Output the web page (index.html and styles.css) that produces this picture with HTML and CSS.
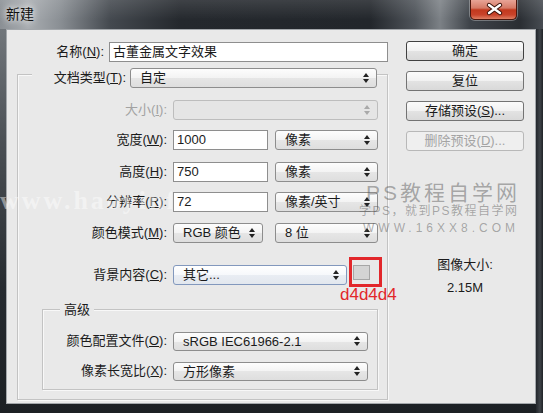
FILE: index.html
```html
<!DOCTYPE html>
<html>
<head>
<meta charset="utf-8"/>
<title>新建</title>
<link rel="stylesheet" href="styles.css">
</head>
<body>
<div class="window">
	<!-- 标题栏 -->
	<div class="titlebar">
		<span class="title">新建</span>
		<span class="close">
			<svg width="47" height="19" viewBox="0 0 47 19">
				<path d="M18 5 L29 13 M29 5 L18 13" stroke="#3b1209" stroke-width="4.4" stroke-linecap="round"/>
				<path d="M18 5 L29 13 M29 5 L18 13" stroke="#fff" stroke-width="2.4" stroke-linecap="round"/>
			</svg>
		</span>
	</div>
	<div class="client">
		<div class="main">
			<div class="name-row">
				<span class="lbl name-lbl">名称(<u>N</u>):</span>
				<div class="input name-input">古董金属文字效果</div>
			</div>
			<!-- 文档类型 -->
			<div class="group">
				<div class="group-head">
					<span class="lbl head-lbl">文档类型(<u>T</u>):</span>
					<div class="select head-select">自定</div>
				</div>
				<div class="row r-size">
					<span class="lbl off">大小(<u>I</u>):</span>
					<div class="select full disabled"></div>
				</div>
				<div class="row r-w">
					<span class="lbl">宽度(<u>W</u>):</span>
					<div class="input num">1000</div>
					<div class="select unit">像素</div>
				</div>
				<div class="row r-h">
					<span class="lbl">高度(<u>H</u>):</span>
					<div class="input num">750</div>
					<div class="select unit">像素</div>
				</div>
				<div class="row r-res">
					<span class="lbl">分辨率(<u>R</u>):</span>
					<div class="input num">72</div>
					<div class="select unit">像素/英寸</div>
				</div>
				<div class="row r-mode">
					<span class="lbl">颜色模式(<u>M</u>):</span>
					<div class="select mode">RGB 颜色</div>
					<div class="select unit">8 位</div>
				</div>
				<div class="row r-bg">
					<span class="lbl">背景内容(<u>C</u>):</span>
					<div class="select bg-select">其它...</div>
					<div class="swatch-wrap">
						<div class="swatch"></div>
						<span class="note">d4d4d4</span>
					</div>
				</div>
				<!-- 高级 -->
				<div class="subgroup">
					<div class="legend">高级</div>
					<div class="row r-prof">
						<span class="lbl">颜色配置文件(<u>O</u>):</span>
						<div class="select sub">sRGB IEC61966-2.1</div>
					</div>
					<div class="row r-ratio">
						<span class="lbl">像素长宽比(<u>X</u>):</span>
						<div class="select sub">方形像素</div>
					</div>
				</div>
			</div>
		</div>
		<!-- 按钮 -->
		<div class="side">
			<div class="btn default">确定</div>
			<div class="btn">复位</div>
			<div class="btn">存储预设(<u>S</u>)...</div>
			<div class="btn off">删除预设(<u>D</u>)...</div>
			<div class="size-title">图像大小:</div>
			<div class="size-val">2.15M</div>
		</div>
	</div>
	<!-- 水印 -->
	<div class="wm-url">www.haoyinfo.com</div>
	<div class="wm-ps">PS教程自学网</div>
	<div class="wm-sub">学PS，就到PS教程自学网</div>
	<div class="wm-site">WWW.16XX8.COM</div>
</div>
</body>
</html>
```
FILE: styles.css
```css
*{margin: 0;padding: 0;box-sizing: border-box}
body{
	width: 543px;
	height: 413px;
	overflow: hidden;
	font: 13px "Liberation Sans", "Noto Sans CJK SC", sans-serif;
	color: #1b1b1b;
	background: #22262a;
}
u{text-decoration: underline}
.window{
	position: relative;
	width: 543px;
	height: 413px;
	overflow: hidden;
	background:
		linear-gradient(90deg, transparent 536px, #23272c 536px, #3e4348 540px, #1f2327 543px),
		linear-gradient(180deg, #7b8085 0%, #4a4f54 35%, #262b30 70%, #1c2024 100%);
}
/* 标题栏 */
.titlebar{
	display: flex;
	align-items: flex-start;
	height: 29px;
	background:
		linear-gradient(180deg, rgba(255,255,255,.12), rgba(255,255,255,0) 70%),
		linear-gradient(90deg, #8a8f94 0, #a9adb1 28px, #8a8f94 60px, #44494f 110px, #24282d 180px, #22262b 370px, #4f545a 415px, #7c8186 440px, #3e4349 470px, #2a2e33 520px, #474c52 543px);
}
.title{
	margin: 5px 0 0 6px;
	font-size: 14px;
	line-height: 18px;
	color: #111;
	text-shadow: 0 0 6px rgba(255,255,255,.9), 0 0 10px rgba(255,255,255,.6);
}
.close{
	display: block;
	width: 47px;
	height: 20px;
	margin: 0 26px 0 auto;
	border: 1px solid #4e160c;
	border-top: 0;
	border-radius: 0 0 5px 5px;
	background: linear-gradient(180deg, #e8a496 0%, #d57a66 42%, #c2391e 52%, #c9432a 78%, #de8064 100%);
	box-shadow: 0 0 0 1px rgba(255,255,255,.3);
}
.close svg{display: block}
/* 内容区 */
.client{
	display: flex;
	height: 375px;
	margin: 0 7px 0 6px;
	padding: 12px 11px 0 10px;
	background: #e9e9e9;
	border: 1px solid #a3a7ab;
}
.main{width: 371px}
.lbl{
	display: block;
	text-align: right;
	line-height: 20px;
	white-space: nowrap;
}
.lbl.off{color: #a2a2a2}
.name-row{
	display: flex;
	height: 20px;
}
.name-lbl{width: 87px;margin-right: 5px}
.input{
	height: 20px;
	border: 1px solid #8e8e8e;
	background: #fff;
	padding-left: 3px;
	line-height: 18px;
	white-space: nowrap;
}
.name-input{width: 279px}
.input.num{width: 95px;margin-right: 7px}
.select{
	position: relative;
	height: 20px;
	border: 1px solid #8d8d8d;
	border-radius: 3px;
	background: linear-gradient(180deg, #fdfdfd, #f3f3f3 50%, #e6e6e6 50%, #dedede);
	padding-left: 9px;
	line-height: 18px;
	white-space: nowrap;
}
.select::before,
.select::after{
	content: '';
	position: absolute;
	right: 7px;
	top: 50%;
	border-left: 3px solid transparent;
	border-right: 3px solid transparent;
}
.select::before{
	margin-top: -5px;
	border-bottom: 4px solid #222;
}
.select::after{
	margin-top: 1px;
	border-top: 4px solid #222;
}
.select.disabled{
	border-color: #bdbdbd;
	background: #e5e5e5;
}
.select.disabled::before{border-bottom-color: #a9a9a9}
.select.disabled::after{border-top-color: #a9a9a9}
/* 分组 */
.group{
	margin-top: 12px;
	border: 1px solid #c3c3c3;
	box-shadow: inset 1px 1px 0 #f8f8f8, 1px 1px 0 #f8f8f8;
	padding-bottom: 9px;
}
.group-head{
	display: flex;
	height: 20px;
	margin: -7px 10px 0 14px;
	padding-left: 20px;
	background: #e9e9e9;
}
.head-lbl{width: 74px;margin-right: 4px}
.head-select{width: 247px}
.row{
	display: flex;
	align-items: center;
	height: 20px;
	margin-top: 10px;
}
.row .lbl{width: 149px;margin-right: 6px}
.r-size{margin-top: 12px}
.r-h{margin-top: 12px}
.r-mode{margin-top: 11px}
.r-bg{margin-top: 22px}
.full{width: 205px}
.unit{width: 103px}
.mode{width: 90px;margin-right: 12px}
.bg-select{
	width: 174px;
	border-color: #8298bd;
	background: linear-gradient(180deg, #ffffff, #f6f8fb 50%, #e9edf3 50%, #e2e7ee);
}
.swatch-wrap{
	position: relative;
	align-self: flex-start;
	width: 33px;
	height: 30px;
	margin: -8px 0 0 2px;
	border: 3px solid #e2272b;
}
.swatch{
	width: 17px;
	height: 15px;
	margin: 5px 0 0 1px;
	background: #d4d4d4;
	border: 1px solid #a6a6a6;
}
.note{
	position: absolute;
	top: calc(100% + 2px);
	left: -12px;
	font-size: 17px;
	line-height: 17px;
	color: #e2272b;
}
.subgroup{
	margin: 24px 9px 0 24px;
	border: 1px solid #c3c3c3;
	box-shadow: inset 1px 1px 0 #f8f8f8, 1px 1px 0 #f8f8f8;
	padding-bottom: 8px;
}
.legend{
	display: inline-block;
	height: 18px;
	margin: -9px 0 0 17px;
	padding: 0 4px;
	line-height: 18px;
	background: #e9e9e9;
	vertical-align: top;
}
.subgroup .row .lbl{width: 124px}
.r-prof{margin-top: 6px}
.select.sub{width: 195px;height: 19px;line-height: 17px}
/* 按钮列 */
.side{
	width: 118px;
	margin: -1px 0 0 18px;
}
.btn{
	height: 20px;
	margin-bottom: 10px;
	border: 1px solid #737373;
	border-radius: 3px;
	background: linear-gradient(180deg, #fbfbfb, #f1f1f1 50%, #e3e3e3 50%, #d9d9d9);
	text-align: center;
	line-height: 18px;
	white-space: nowrap;
}
.btn.default{border-color: #404040}
.btn.off{
	color: #a4a4a4;
	border-color: #b8b8b8;
	background: #efefef;
}
.size-title{
	margin-top: 105px;
	text-align: center;
	line-height: 18px;
}
.size-val{
	margin-top: 5px;
	text-align: center;
	line-height: 18px;
}
/* 水印 */
.wm-url{
	position: absolute;
	left: 0;
	top: 186px;
	width: 172px;
	overflow: hidden;
	font: bold 26px "Liberation Serif", serif;
	letter-spacing: 3px;
	color: rgba(255,255,255,.45);
	white-space: nowrap;
}
.wm-ps{
	position: absolute;
	left: 366px;
	top: 176px;
	font: 21px "Liberation Sans", "Noto Sans CJK SC", sans-serif;
	letter-spacing: 3px;
	color: rgba(80,80,80,.45);
	white-space: nowrap;
}
.wm-sub{
	position: absolute;
	left: 359px;
	top: 204px;
	font-size: 12px;
	line-height: 14px;
	letter-spacing: 1.5px;
	color: rgba(80,80,80,.45);
	white-space: nowrap;
}
.wm-site{
	position: absolute;
	left: 363px;
	top: 221px;
	font-size: 12px;
	line-height: 14px;
	letter-spacing: 4px;
	color: rgba(80,80,80,.45);
	white-space: nowrap;
}
```
